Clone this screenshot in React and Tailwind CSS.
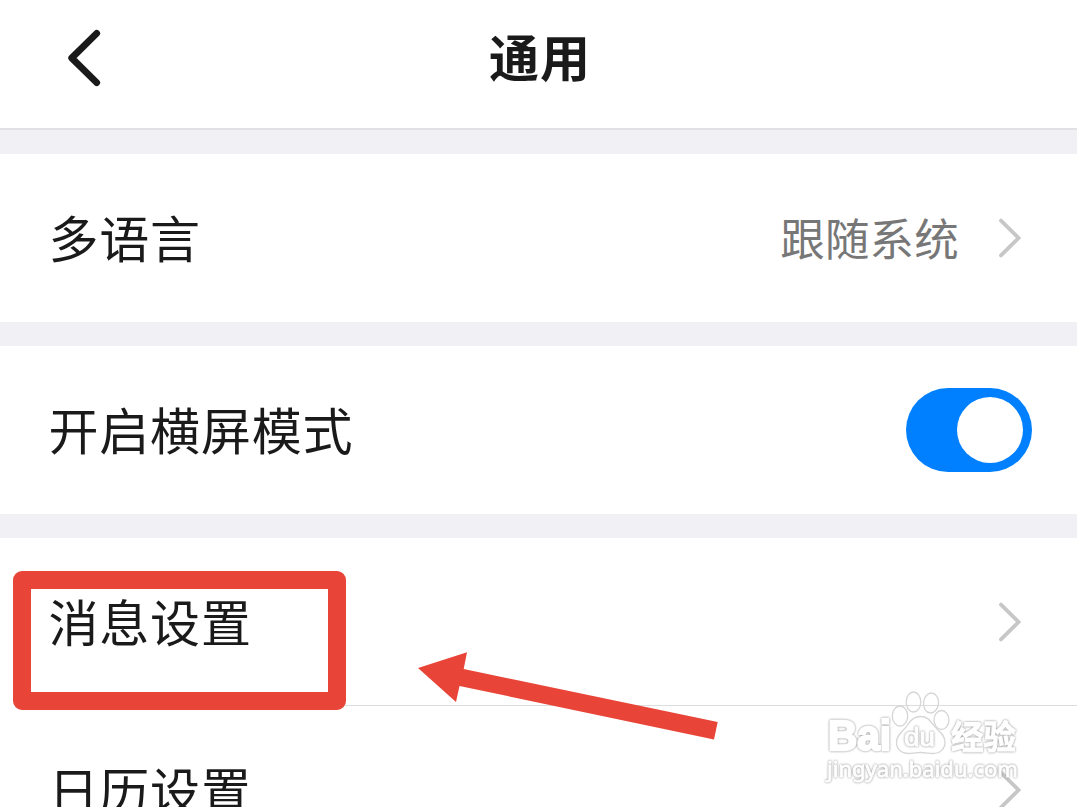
import React from "react";

const FONT = "font-['Noto_Sans_CJK_SC','Liberation_Sans',sans-serif]";

function Chevron() {
  return (
    <svg className="block shrink-0" width="28" height="44" viewBox="0 0 28 44" fill="none">
      <path d="M4 4.600 21.500 22 4 39.400" stroke="#c7c7c7" strokeWidth="3.8" strokeLinecap="round" />
    </svg>
  );
}

function Row({ label, children }) {
  return (
    <div className="flex h-[168px] shrink-0 items-center justify-between bg-white pl-[48.5px]">
      <span className="whitespace-nowrap pb-[5px] text-[50px] leading-[60px] tracking-[0.8px] text-[#1a1a1a]">{label}</span>
      {children}
    </div>
  );
}

function Toggle() {
  return (
    <div role="switch" aria-checked="true" className="mr-[45px] flex h-[84px] w-[126px] items-center justify-end rounded-full bg-[#0080ff] pr-[9px]">
      <div className="size-[66px] rounded-full bg-white" />
    </div>
  );
}

function Watermark() {
  return (
    <svg className="absolute left-[820px] top-[685px]" width="210" height="105" viewBox="0 0 210 105" strokeLinejoin="round">
      <g fill="none" stroke="#d6d6d6" strokeWidth="1.300">
        <ellipse cx="80" cy="31" rx="7.700" ry="10" />
        <ellipse cx="93.500" cy="17" rx="7.300" ry="10" />
        <ellipse cx="111" cy="18" rx="7.500" ry="10" transform="rotate(5 111 18)" />
        <ellipse cx="121.500" cy="35" rx="7.500" ry="9.500" />
        <path d="M100.500 31.500c-6 0-10 3.500-13 8.500-4 6.500-11 9-11 17.500 0 7 5 11 12 11 5 0 8-1 12.500-1s8 1 12 1c7 0 12-4.500 12-11.500 0-8-7.500-11-12-17.500-3.500-5-6.500-8-12.500-8Z" fill="#fff" />
      </g>
      <g fill="#fff" stroke="#fff" className="[filter:drop-shadow(0_0_0.8px_#888)]">
        <text x="8" y="65" fontSize="42" fontFamily="Liberation Sans" fontWeight="700" textLength="63" lengthAdjust="spacingAndGlyphs" strokeWidth="2.500">Bai</text>
        <text x="84" y="61" fontSize="26" fontFamily="Liberation Sans" fontWeight="400" textLength="31" lengthAdjust="spacingAndGlyphs" strokeWidth="1">du</text>
        <text x="131" y="64" fontSize="33" fontFamily="Noto Sans CJK SC" fontWeight="700" textLength="65" lengthAdjust="spacingAndGlyphs" strokeWidth="1">经验</text>
        <text x="7" y="92" fontSize="21.500" fontFamily="Noto Sans" fontWeight="400" textLength="191" lengthAdjust="spacingAndGlyphs" strokeWidth="0.800">jingyan.baidu.com</text>
      </g>
    </svg>
  );
}

export default function App() {
  return (
    <div className={`relative flex h-[807px] w-[1077px] flex-col overflow-hidden bg-[#f0f0f5] ${FONT}`}>
      <header className="grid h-[130px] shrink-0 grid-cols-[1fr_auto_1fr] border-b-2 border-[#e1e1e4] bg-white">
        <svg className="ml-[60px] mt-[24px] block" width="48" height="68" viewBox="0 0 48 68" fill="none">
          <path d="M36.700 9.400 11.700 34 36.700 58.600" stroke="#1a1a1a" strokeWidth="6.800" strokeLinecap="round" strokeLinejoin="round" />
        </svg>
        <h1 className="mt-[25px] pl-[3px] text-[50px] font-bold leading-[60px] tracking-[1px] text-[#1a1a1a]">通用</h1>
      </header>

      <div className="flex flex-col gap-6 pt-6">
        <Row label="多语言">
          <div className="flex items-center gap-[38px] pr-[52px]">
            <span className="pb-[2px] text-[44.5px] leading-[60px] tracking-[0.2px] text-[#777]">跟随系统</span>
            <Chevron />
          </div>
        </Row>
        <Row label="开启横屏模式">
          <Toggle />
        </Row>
        <section className="bg-white">
          <Row label="消息设置">
            <div className="pr-[52px]">
              <Chevron />
            </div>
          </Row>
          <div className="-mt-px ml-[50px] h-px bg-[#dcdddf]" />
          <Row label="日历设置">
            <div className="pr-[52px]">
              <Chevron />
            </div>
          </Row>
        </section>
      </div>

      <div className="absolute left-[13px] top-[571px] h-[139px] w-[333px] rounded-[9px] border-[18px] border-[#e84538]" />
      <svg className="absolute left-[410px] top-[645px]" width="315" height="100" viewBox="410 645 315 100">
        <path d="M418 668 467 652.300 463.700 669 717.700 722 714 739.500 459.500 686 456 702Z" fill="#e84538" />
      </svg>
      <Watermark />
    </div>
  );
}
